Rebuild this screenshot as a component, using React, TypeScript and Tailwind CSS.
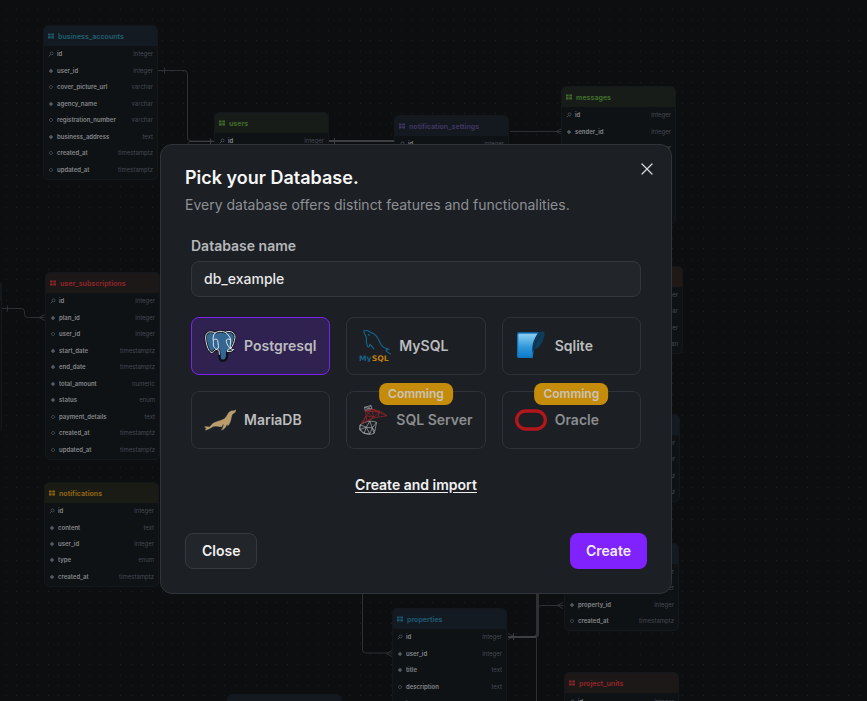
import { useState, type ReactNode } from "react";
import { X } from "lucide-react";
import { SiMariadb } from "react-icons/si";

type Column = { name: string; type: string; kind?: "key" | "required" | "optional" };

type TableNode = {
  title: string;
  x: number;
  y: number;
  height: number;
  tone: string;
  columns: Column[];
};

const BLUE = "bg-[#131a21] text-[#1f5b6b]";
const TEAL = "bg-[#131a22] text-[#1d5870]";
const GREEN = "bg-[#181c18] text-[#3f6b2b]";
const RED = "bg-[#1c1817] text-[#8a2527]";
const AMBER = "bg-[#1b1b16] text-[#8c6312]";
const PURPLE = "bg-[#14181f] text-[#3d3560]";
const ORANGE = "bg-[#201815] text-[#7c3d1b]";

const tables: TableNode[] = [
  {
    title: "business_accounts",
    x: 43,
    y: 25,
    height: 155,
    tone: BLUE,
    columns: [
      { name: "id", type: "integer", kind: "key" },
      { name: "user_id", type: "integer", kind: "required" },
      { name: "cover_picture_url", type: "varchar" },
      { name: "agency_name", type: "varchar", kind: "required" },
      { name: "registration_number", type: "varchar" },
      { name: "business_address", type: "text", kind: "required" },
      { name: "created_at", type: "timestamptz" },
      { name: "updated_at", type: "timestamptz" },
    ],
  },
  {
    title: "user_subscriptions",
    x: 45,
    y: 272,
    height: 188,
    tone: RED,
    columns: [
      { name: "id", type: "integer", kind: "key" },
      { name: "plan_id", type: "integer", kind: "required" },
      { name: "user_id", type: "integer" },
      { name: "start_date", type: "timestamptz", kind: "required" },
      { name: "end_date", type: "timestamptz", kind: "required" },
      { name: "total_amount", type: "numeric", kind: "required" },
      { name: "status", type: "enum", kind: "required" },
      { name: "payment_details", type: "text" },
      { name: "created_at", type: "timestamptz" },
      { name: "updated_at", type: "timestamptz" },
    ],
  },
  {
    title: "notifications",
    x: 44,
    y: 482,
    height: 105,
    tone: AMBER,
    columns: [
      { name: "id", type: "integer", kind: "key" },
      { name: "content", type: "text", kind: "required" },
      { name: "user_id", type: "integer", kind: "required" },
      { name: "type", type: "enum", kind: "required" },
      { name: "created_at", type: "timestamptz", kind: "required" },
    ],
  },
  {
    title: "users",
    x: 214,
    y: 112,
    height: 39,
    tone: GREEN,
    columns: [{ name: "id", type: "integer", kind: "key" }],
  },
  {
    title: "notification_settings",
    x: 394,
    y: 115,
    height: 39,
    tone: PURPLE,
    columns: [{ name: "id", type: "integer", kind: "key" }],
  },
  {
    title: "messages",
    x: 561,
    y: 86,
    height: 138,
    tone: GREEN,
    columns: [
      { name: "id", type: "integer", kind: "key" },
      { name: "sender_id", type: "integer", kind: "required" },
      { name: "receiver_id", type: "integer", kind: "required" },
      { name: "content", type: "text", kind: "required" },
      { name: "is_read", type: "boolean" },
      { name: "created_at", type: "timestamptz" },
      { name: "updated_at", type: "timestamptz" },
    ],
  },
  {
    title: "plans",
    x: 568,
    y: 266,
    height: 88,
    tone: ORANGE,
    columns: [
      { name: "id", type: "integer", kind: "key" },
      { name: "name", type: "varchar", kind: "required" },
      { name: "price", type: "integer", kind: "required" },
      { name: "active", type: "boolean" },
    ],
  },
  {
    title: "reviews",
    x: 565,
    y: 414,
    height: 88,
    tone: BLUE,
    columns: [
      { name: "id", type: "integer", kind: "key" },
      { name: "user_id", type: "integer", kind: "required" },
      { name: "created_at", type: "timestamptz" },
      { name: "updated_at", type: "timestamptz" },
    ],
  },
  {
    title: "favorites",
    x: 564,
    y: 543,
    height: 88,
    tone: BLUE,
    columns: [
      { name: "id", type: "integer", kind: "key" },
      { name: "user_id", type: "integer", kind: "required" },
      { name: "property_id", type: "integer", kind: "required" },
      { name: "created_at", type: "timestamptz" },
    ],
  },
  {
    title: "properties",
    x: 392,
    y: 608,
    height: 106,
    tone: TEAL,
    columns: [
      { name: "id", type: "integer", kind: "key" },
      { name: "user_id", type: "integer", kind: "required" },
      { name: "title", type: "text", kind: "required" },
      { name: "description", type: "text" },
      { name: "image360_url", type: "text" },
    ],
  },
  {
    title: "project_units",
    x: 564,
    y: 672,
    height: 40,
    tone: RED,
    columns: [{ name: "id", type: "integer", kind: "key" }],
  },
  { title: "", x: 227, y: 694, height: 39, tone: PURPLE, columns: [] },
  { title: "", x: -113, y: 280, height: 153, tone: PURPLE, columns: [] },
];

function ColumnMark({ kind = "optional" }: { kind?: Column["kind"] }) {
  return (
    <svg viewBox="0 0 6 6" className="size-[6px] shrink-0 text-[#575b60]" fill="none" stroke="currentColor">
      {kind === "key" && (
        <>
          <circle cx="3.6" cy="2.4" r="1.5" strokeWidth="0.7" />
          <path d="M2.5 3.5 0.8 5.3" strokeWidth="0.8" />
        </>
      )}
      {kind === "required" && <path d="M3 0.8 5.2 3 3 5.2 0.8 3Z" fill="currentColor" stroke="none" />}
      {kind === "optional" && <path d="M3 1.1 4.9 3 3 4.9 1.1 3Z" strokeWidth="0.7" />}
    </svg>
  );
}

function TableCard({ table }: { table: TableNode }) {
  return (
    <section
      className="absolute flex w-[115px] flex-col overflow-hidden rounded-[5px] border border-[#14181c] bg-[#0e1215] pb-px"
      style={{ left: table.x, top: table.y, height: table.height }}
    >
      <h2 className={`flex h-5 shrink-0 items-center gap-1 px-1 text-[7px] leading-none font-bold ${table.tone}`}>
        {table.title && (
          <svg viewBox="0 0 6 6" className="size-[6px] shrink-0" fill="currentColor">
            <path d="M0 .5h2.6v2.1H0zM3.3.5H6v2.1H3.3zM0 3.3h2.6v2.2H0zM3.3 3.3H6v2.2H3.3z" />
          </svg>
        )}
        {table.title}
      </h2>
      <ul className="flex flex-1 flex-col px-1">
        {table.columns.map((column) => (
          <li key={column.name} className="flex flex-1 items-center gap-[3px] text-[6px] leading-none">
            <ColumnMark kind={column.kind} />
            <span className="font-semibold text-[#85878a]">{column.name}</span>
            <span className="ml-auto text-[#454952]">{column.type}</span>
          </li>
        ))}
      </ul>
    </section>
  );
}

function Canvas() {
  const steps = [0, 10, 21, 31, 42];

  return (
    <div className="absolute inset-0 overflow-hidden" aria-hidden="true">
      <svg className="absolute inset-0 size-full" fill="none">
        <defs>
          <pattern id="dots" x="6" y="9" width="52" height="52" patternUnits="userSpaceOnUse">
            {steps.map((x) => steps.map((y) => <rect key={`${x}-${y}`} x={x} y={y} width="1" height="1" fill="#1c1f22" />))}
          </pattern>
        </defs>
        <rect width="100%" height="100%" fill="url(#dots)" />
        <g stroke="#2d3034">
          <path d="M158 70.5h26q3.5 0 3.5 3.5v64q0 3 3 3h23" />
          <path d="M164.5 67.5v6M188.5 150v-6q0-3 3-3" />
          <path d="M510 131.5h52M556 131.5l6-3M556 131.5l6 3" />
          <path d="M0 308.5h21q3.5 0 3.5 3v3q0 3 3 3h17M7.5 305.5v6M39 317.5l6-3M39 317.5l6 3" />
          <path d="M362.5 590v60q0 3 3 3h27M386 653.5l6-3M386 653.5l6 3" />
          <path d="M536.5 590v111M538.5 608q0-2.5 3-2.5h22M557 605.5l6-3M557 605.5l6 3" />
          <path d="M508 633.5l6 3-6 3" />
        </g>
        <path d="M537.5 590v44q0 2.500-3 2.500" stroke="#2d3034" strokeWidth="3" />
        <g stroke="#3c3f43">
          <path d="M190 141.5h24M210.5 138.5v6M334.5 138v7M513.5 633v7" />
          <path d="M329 141h65M508 637h28" strokeWidth="2" />
        </g>
      </svg>
      {tables.map((table) => (
        <TableCard key={`${table.x}-${table.y}`} table={table} />
      ))}
    </div>
  );
}

function PostgresLogo() {
  return (
    <svg viewBox="0 0 96 96" className="h-8 w-8 min-w-0" strokeLinecap="round" strokeLinejoin="round">
      <path
        d="M33 9C18 1 4 6 5 24c1 19 8 38 16 43 5 2 9-3 13-8 4 3 8 3 11 2l2 22c1 8 6 10 12 9 7-1 9-6 10-12l1-16c8 2 17-1 20-6-5 1-8 0-10-2 7-9 12-22 13-34C93 7 78 0 64 7 53 2 42 3 33 9Z"
        fill="#336791"
        stroke="#0d1016"
        strokeWidth="7"
      />
      <g fill="none" stroke="#dfe4e9" strokeWidth="3">
        <path d="M33 9C18 1 4 6 5 24c1 19 8 38 16 43 5 2 9-3 13-8M70 64c8 2 17-1 20-6-5 1-8 0-10-2 7-9 12-22 13-34C93 7 78 0 64 7 53 2 42 3 33 9" />
        <path d="M33 9c-7 7-6 17-5 25 1 7-1 10 1 15 3 6 8 10 16 12l1 12M28 30c5-4 11-4 13 1s0 10 2 15c2 6 0 11-7 13" />
        <path d="M64 7c9 7 15 15 16 23 0 8-3 17 0 26M78 28c-7-3-12 0-11 6 1 9 7 17 13 22M80 56c-5-1-9 1-10 8" />
      </g>
    </svg>
  );
}

function MysqlLogo() {
  return (
    <svg viewBox="0 0 96 96" className="h-8 w-8 min-w-0" fill="none">
      <g stroke="#14638a" strokeWidth="3.5" strokeLinecap="round" strokeLinejoin="round">
        <path d="M15 3c5-5 13-1 19 4 10 2 17 9 22 17 6 9 8 18 13 24 4 6 13 7 21 10-6 0-10 1-8 5 2 3 8 5 12 9" />
        <path d="M15 3c-2 6 5 12 7 19 1 5-1 12 1 18 1 6 3 11 6 11 3-1 2-6 4-8 4 5 8 7 11 14" />
        <path d="m28 13 3 3" />
      </g>
      <g fontFamily="DejaVu Sans, sans-serif" fontSize="23">
        <text x="0" y="92" fill="#1b5f82">
          My
        </text>
        <text x="38" y="92" fill="#c07f10" fontWeight="bold">
          SQL
        </text>
      </g>
    </svg>
  );
}

function SqliteLogo() {
  return (
    <svg viewBox="0 0 96 96" className="h-8 w-8 min-w-0">
      <defs>
        <linearGradient id="sqlite" x1="0" y1="0" x2="0" y2="1">
          <stop offset="0" stopColor="#8fd0f3" />
          <stop offset="0.6" stopColor="#2e96da" />
          <stop offset="1" stopColor="#0f7fcc" />
        </linearGradient>
      </defs>
      <path d="M11 7h60L58 48l-5 36H11q-5 0-5-5V12q0-5 5-5Z" fill="#1177bd" />
      <path d="M13 11h54L54 46l-4 34H13q-3 0-3-3V14q0-3 3-3Z" fill="url(#sqlite)" />
      <path d="M87 6c-5-5-13-2-19 5-10 12-17 32-16 50l-1 8c2-5 3-7 5-10 14-2 22-12 28-28 3-9 7-20 3-25Z" fill="#0f3c5b" />
      <path d="M80 12C68 24 59 42 54 64" fill="none" stroke="#0a2a41" strokeWidth="2" />
    </svg>
  );
}

function MariadbLogo() {
  return <SiMariadb className="h-8 w-8 min-w-0 text-[#bd9c6b]" stroke="#12364f" strokeWidth="0.3" />;
}

function SqlServerLogo() {
  return (
    <svg viewBox="0 0 96 96" className="h-8 w-8 min-w-0" fill="none" strokeLinejoin="round">
      <g stroke="#c4c7ca" strokeWidth="2.5">
        <path d="m18 6 22-6 3 12-22 6ZM18 6l25 6M21 18 40 0" />
        <path d="M4 64c8-7 20-11 32-12 8 0 16 1 22 4-3 14-4 26-8 36-9 5-24 4-33 0C6 86 0 78 4 64Z" />
        <path d="m4 64 20 8 12-20 8 22 14-18M2 80l22-8 20 2 8 10M17 92l7-20 12 22 8-20 6 18M4 64l-2 16 15 12 19 2" />
      </g>
      <g stroke="#b3262b" strokeWidth="2.5">
        <path d="M21 18c4 14 3 26-13 42l18-7 22-12 44-7C80 22 62 16 43 12Z" />
        <path d="m21 18 27 21-5-27 26 10-21 17M24 34l24 5-22 12-2-17 19-22M43 12l49 22M69 22l-6 14M21 18l48 4M8 60l16-26" />
      </g>
    </svg>
  );
}

function OracleLogo() {
  return (
    <svg viewBox="0 0 96 96" className="h-8 w-8 min-w-0" fill="none">
      <rect x="5" y="21" width="86" height="54" rx="27" stroke="#d9151b" strokeWidth="10" />
    </svg>
  );
}

type Engine = { id: string; label: string; logo: ReactNode; coming?: boolean };

const engines: Engine[] = [
  { id: "postgresql", label: "Postgresql", logo: <PostgresLogo /> },
  { id: "mysql", label: "MySQL", logo: <MysqlLogo /> },
  { id: "sqlite", label: "Sqlite", logo: <SqliteLogo /> },
  { id: "mariadb", label: "MariaDB", logo: <MariadbLogo /> },
  { id: "sqlserver", label: "SQL Server", logo: <SqlServerLogo />, coming: true },
  { id: "oracle", label: "Oracle", logo: <OracleLogo />, coming: true },
];

function EngineOption({ engine, checked, onSelect }: { engine: Engine; checked: boolean; onSelect: () => void }) {
  return (
    <label
      className={`relative flex h-[58px] min-w-0 items-center rounded-lg border px-3 text-sm font-semibold ${
        checked ? "border-[#7c22ee] bg-[#2f2150]" : "border-[#2f3236]"
      } ${engine.coming ? "text-[#8b8d90]" : "cursor-pointer text-[#bbbcbe]"}`}
    >
      <input
        type="radio"
        name="engine"
        value={engine.id}
        checked={checked}
        disabled={engine.coming}
        onChange={onSelect}
        className="sr-only"
      />
      <span className={`flex min-w-0 items-center ${engine.coming ? "opacity-80" : ""}`}>{engine.logo}</span>
      <span className="ml-2 whitespace-nowrap">{engine.label}</span>
      {engine.coming && (
        <span className="absolute -top-[9px] left-1/2 -translate-x-1/2 rounded-lg bg-[#c58c0b] px-[9px] py-[3px] text-xs leading-4 text-[#c9c3b8]">
          Comming
        </span>
      )}
    </label>
  );
}

export default function App() {
  const [name, setName] = useState("db_example");
  const [engine, setEngine] = useState("postgresql");

  return (
    <main className="relative min-h-screen overflow-hidden bg-[#0d0e10] font-['Inter',sans-serif]">
      <Canvas />
      <div className="relative flex min-h-screen items-center justify-center pt-[37px] pr-[35px]">
        <div
          role="dialog"
          aria-labelledby="dialog-title"
          className="relative w-full max-w-lg rounded-xl border border-[#303338] bg-[#1c1f23] p-6"
        >
          <h1 id="dialog-title" className="text-lg leading-[18px] font-semibold text-[#f6f6f7]">
            Pick your Database.
          </h1>
          <p className="mt-2 text-sm leading-5 text-[#8d9095]">
            Every database offers distinct features and functionalities.
          </p>
          <button type="button" aria-label="Close dialog" className="absolute top-3.5 right-3.5 text-[#d5d6d8]">
            <X className="size-5" strokeWidth={1.5} />
          </button>

          <form className="mt-[21px]" onSubmit={(event) => event.preventDefault()}>
            <div className="px-[6px]">
              <label htmlFor="database-name" className="block text-sm leading-5 font-semibold text-[#b6b7ba]">
                Database name
              </label>
              <input
                id="database-name"
                value={name}
                onChange={(event) => setName(event.target.value)}
                className="mt-[5px] block h-9 w-full rounded-lg border border-[#34373b] bg-[#222529] px-3 pb-0.5 text-sm font-medium text-[#e8e8ea] outline-none"
              />
              <fieldset className="mt-5 grid grid-cols-3 gap-4">
                <legend className="sr-only">Database engine</legend>
                {engines.map((item) => (
                  <EngineOption
                    key={item.id}
                    engine={item}
                    checked={engine === item.id}
                    onSelect={() => setEngine(item.id)}
                  />
                ))}
              </fieldset>
            </div>
            <div className="mt-[26px] flex justify-center">
              <a href="#import" className="text-sm leading-5 font-semibold text-[#f1f1f2] underline underline-offset-2">
                Create and import
              </a>
            </div>
            <div className="mt-[38px] flex justify-between">
              <button
                type="button"
                className="h-9 rounded-lg border border-[#36393d] bg-[#222529] px-4 text-sm font-semibold text-[#f1f1f2]"
              >
                Close
              </button>
              <button type="submit" className="h-9 rounded-lg bg-[#7f22fe] px-4 text-sm font-semibold text-[#f1edf9]">
                Create
              </button>
            </div>
          </form>
        </div>
      </div>
    </main>
  );
}
